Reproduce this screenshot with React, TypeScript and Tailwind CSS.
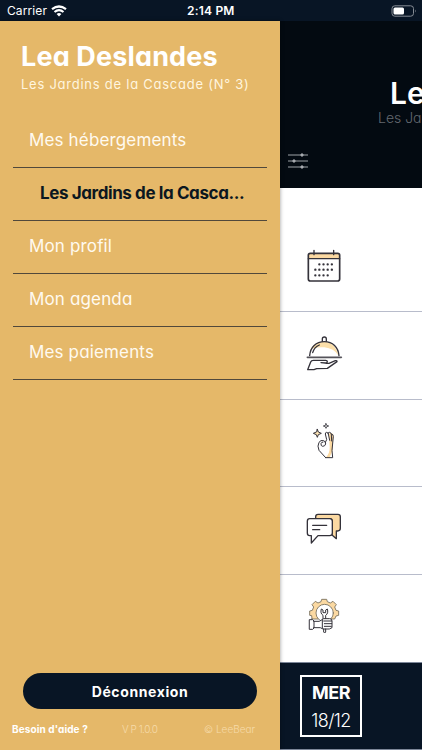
import type { ReactNode } from 'react'

interface MenuItem {
  label: string
  active?: boolean
}

const menu: MenuItem[] = [
  { label: 'Mes hébergements' },
  { label: 'Les Jardins de la Casca...', active: true },
  { label: 'Mon profil' },
  { label: 'Mon agenda' },
  { label: 'Mes paiements' },
]

function Icon({ children }: { children: ReactNode }) {
  return (
    <svg
      viewBox="0 0 210 210"
      className="ml-[10px] block h-[70px] w-[70px]"
      fill="none"
      stroke="#34323a"
      strokeWidth="4"
      strokeLinecap="round"
      strokeLinejoin="round"
    >
      {children}
    </svg>
  )
}

function CalendarIcon() {
  return (
    <Icon>
      <path d="M55 71V61q0-6 6-6h82q6 0 6 6v10z" fill="#fbd9a2" stroke="none" />
      <rect x="55" y="55" width="94" height="83" rx="6" strokeWidth="5" />
      <path d="M55 71h94M72 46v13M131 46v13" />
      <path
        d="M88 88h.1M100.500 88h.1M113 88h.1M125.500 88h.1M76 104h.1M88 104h.1M100.500 104h.1M113 104h.1M125.500 104h.1M76 121h.1M88 121h.1M100.500 121h.1M113 121h.1"
        strokeWidth="7"
      />
    </Icon>
  )
}

function DishIcon() {
  return (
    <Icon>
      <path d="M60 90q12-25 43-25t43 42q-14-22-43-25-29-2-43 8z" fill="#fbdfaa" stroke="none" />
      <path d="M59 107c2-25 19-42 44-42s42 17 44 42" />
      <path d="M52 112h102" strokeWidth="5" stroke="#55535a" />
      <path d="M97 64v-7q0-6 6-6t6 6v7M68 98q5-17 20-23" />
      <path d="M53 149l9-23q2-5 8-5h37q5 0 5 4t-6 4l-13-1M108 130h9l19-8q6-1 5 3l-29 20-32 1-8 3H53" />
    </Icon>
  )
}

function PerfectIcon() {
  return (
    <Icon>
      <path d="M117 71q10-5 13 5l-3 47-9 21h-11q13-15 12-32z" fill="#fbd9a2" stroke="none" />
      <path
        d="M107 143l-20-22q-6-13 0-24 5-8 14-5 7 3 6 10-2 7-9 7-6-1-5-8 1-5 6-5M106 97l4-8-4-17q0-5 4-5t5 5l4 19M114 71q0-5 5-4t5 7l1 19M124 72q6 0 6 7l-4 42 2 22h-21"
        strokeWidth="3"
      />
      <path d="M82 58l3 8 9 4-9 4-3 8-3-8-9-4 9-4z" fill="#fce3b4" strokeWidth="3" />
      <path d="M108 41l2 5 6 2-6 2-2 5-2-5-6-2 6-2z" strokeWidth="2.500" />
    </Icon>
  )
}

function ChatIcon() {
  return (
    <Icon>
      <path
        d="M77 71v-6q0-7 7-7h60q7 0 7 7v35q0 8-8 8h-4v23l-13-11V79q0-8-8-8z"
        fill="#fbd9a2"
      />
      <path d="M59 71h60q8 0 8 8v35q0 8-8 8H84l-20 22v-22h-5q-7 0-7-8V79q0-8 7-8z" fill="#fff" />
      <path d="M68 91h42M68 104h21" />
    </Icon>
  )
}

function RepairIcon() {
  return (
    <Icon>
      <path
        d="M66 116l-1-9-6-1V93l8-2 4-10-5-7 10-10 8 5 9-4 2-7h15l2 7 9 4 8-5 10 10-5 7 4 10 8 2v13l-8 2-4 9H66z"
        fill="#fbd9a2"
        strokeWidth="2.500"
        stroke="#706957"
      />
      <circle cx="104" cy="99" r="26" fill="#fff" stroke="#706957" strokeWidth="2.500" />
      <path d="M99 118v-12q-9-6-5-19l5 3v8h8v-8l5-3q4 13-5 19v12" strokeWidth="3" />
      <path
        d="M59 119h9l4 4v21l-4 4h-9zM71 124h17l13-8h18q7 0 7 7v20l-8 4H99l-8-4H71M101 123h24M103 131h22M103 139h21M97 121v23M101 147v9q3 6 6 0v-9"
        fill="#fff"
        strokeWidth="3"
      />
    </Icon>
  )
}

function StatusBar() {
  return (
    <div className="flex h-[21px] shrink-0 items-center bg-[#081525] text-[12px] text-white [font-feature-settings:normal]">
      <span className="w-[51px] pl-[7px] tracking-[0.1px]">Carrier</span>
      <svg viewBox="0 0 16 12" className="h-3 w-4" fill="none" stroke="white" strokeWidth="2.200">
        <path d="M1 4.200q7-5.400 14 0M3.500 7q4.500-3.600 9 0" />
        <path d="M8 11.500L5.600 9q2.400-2 4.800 0z" fill="white" stroke="none" />
      </svg>
      <span className="ml-[120px] w-[60px] whitespace-nowrap font-semibold tracking-[0.2px]">2:14 PM</span>
      <svg viewBox="0 0 26 12" className="ml-[144px] h-3 w-[26px]">
        <rect x="1" y=".8" width="21.500" height="10.400" rx="2.800" fill="none" stroke="#868c94" />
        <rect x="2.500" y="2.400" width="10.500" height="7.200" rx="1.500" fill="white" />
        <path d="M24 4.500q1.500 1.500 0 3z" fill="#868c94" />
      </svg>
    </div>
  )
}

function Drawer() {
  return (
    <aside className="z-10 flex w-[280px] shrink-0 flex-col bg-[#e5b869] shadow-[0_0_4px_#00000066]">
      <div className="h-[94px] pl-[21px] pt-[18px] text-white">
        <h1 className="whitespace-nowrap text-[27px] font-bold leading-[36px] tracking-[0.15px]">Lea Deslandes</h1>
        <p className="mt-[1px] whitespace-nowrap text-[13px] leading-4 tracking-[0.75px] text-[#fff5df]">
          Les Jardins de la Cascade (N° 3)
        </p>
      </div>

      <nav className="mx-[13px]">
        {menu.map((item) => (
          <div
            key={item.label}
            className={`flex h-[53px] items-center whitespace-nowrap border-b border-[#51483b] text-[17px] ${
              item.active
                ? 'pl-[27px] font-bold tracking-[-0.4px] text-[#0b1720]'
                : 'pl-4 tracking-[0.15px] text-[#fffaf0]'
            }`}
          >
            {item.label}
          </div>
        ))}
      </nav>

      <div className="mt-auto px-[23px]">
        <button className="h-9 w-[234px] rounded-full bg-[#081525] pt-px text-[14px] font-bold tracking-[0.6px] text-white">
          Déconnexion
        </button>
      </div>
      <div className="flex h-[41px] items-center whitespace-nowrap pl-3 text-[10px] text-[#f6dba9]">
        <span className="w-[110px] font-bold tracking-[0.1px] text-white">Besoin d&apos;aide ?</span>
        <span className="w-[82px] font-light tracking-[-0.5px]">V P 1.0.0</span>
        <span className="font-light">© LeeBear</span>
      </div>
    </aside>
  )
}

function Home() {
  return (
    <main className="flex w-[142px] shrink-0 flex-col overflow-hidden bg-white">
      <header className="h-[167px] shrink-0 bg-[#030a11]">
        <div className="h-[132px] whitespace-nowrap pt-[54px]">
          <div className="pl-[110px] text-[30px] font-semibold leading-[36px] text-white">Lea Deslandes</div>
          <div className="pl-[98px] text-[14px] font-light leading-[14px] text-[#646970]">Les Jardins</div>
        </div>
        <svg viewBox="0 0 20 16" className="ml-2 h-4 w-5" stroke="#9fa3a8" fill="#babdc1">
          <path d="M0 2h20M0 8h20M0 14h20" />
          <circle cx="14" cy="2" r="1.200" />
          <circle cx="6" cy="8" r="1.200" />
          <circle cx="14" cy="14" r="1.200" />
        </svg>
      </header>

      <div className="h-[124px] shrink-0 border-b border-[#b8bccb] pt-[47px]"><CalendarIcon /></div>
      <div className="h-[88px] shrink-0 border-b border-[#b8bccb] pt-2"><DishIcon /></div>
      <div className="h-[87px] shrink-0 border-b border-[#b8bccb] pt-[10px]"><PerfectIcon /></div>
      <div className="h-[88px] shrink-0 border-b border-[#b8bccb] pt-2"><ChatIcon /></div>
      <div className="h-[87px] shrink-0 pt-[5px]"><RepairIcon /></div>

      <footer className="h-[88px] shrink-0 border-y border-[#7d8799] bg-[#081525] pl-[20px] pt-[12px]">
        <div className="flex h-[62px] w-[62px] flex-col items-center border-2 border-white pt-[3px] text-white">
          <span className="text-[18px] font-bold leading-[26px] tracking-[-0.5px]">MER</span>
          <span className="text-[18px] font-light leading-[29px] tracking-[-0.6px]">18/12</span>
        </div>
      </footer>
    </main>
  )
}

export default function App() {
  return (
    <div className="flex h-[750px] w-[422px] flex-col overflow-hidden bg-white font-['Inter','Liberation_Sans',sans-serif] [font-feature-settings:'cv11']">
      <StatusBar />
      <div className="flex min-h-0 flex-1">
        <Drawer />
        <Home />
      </div>
    </div>
  )
}
